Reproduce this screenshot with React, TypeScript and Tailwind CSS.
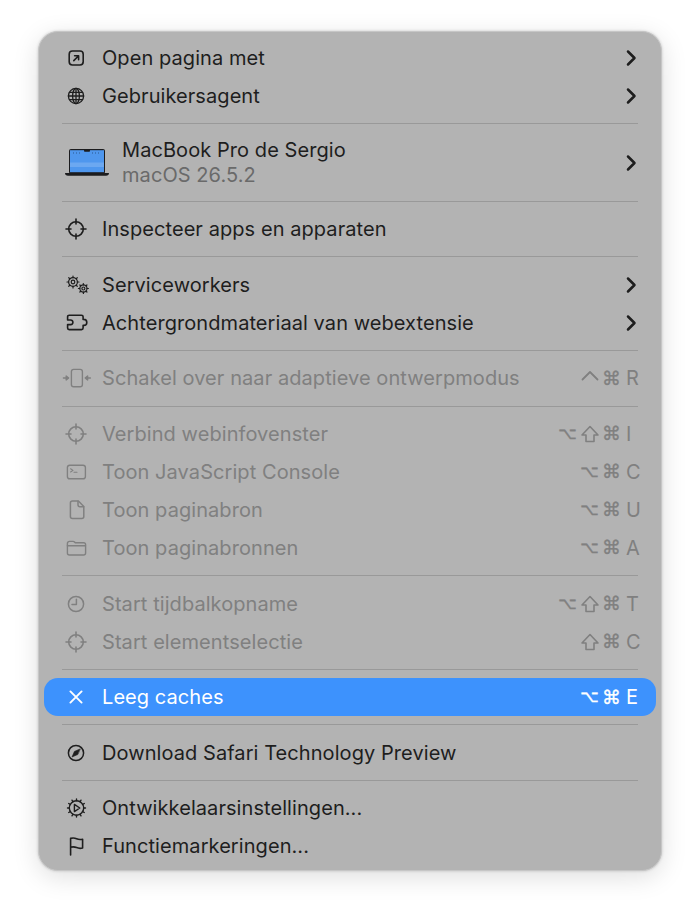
import type { ReactNode } from "react";

type Item = {
  label: string;
  icon: ReactNode;
  keys?: string[];
  sub?: boolean;
  disabled?: boolean;
  active?: boolean;
};

const Svg = ({ children, sw = 1.5 }: { children: ReactNode; sw?: number }) => (
  <svg
    viewBox="0 0 28 28"
    fill="none"
    stroke="currentColor"
    strokeWidth={sw}
    strokeLinecap="round"
    strokeLinejoin="round"
    className="w-[28px] h-[28px] overflow-visible shrink-0"
  >
    {children}
  </svg>
);

const Crosshair = (
  <Svg sw={1.6}>
    <circle cx="14" cy="14" r="7.3" />
    <path d="M14 4v5M14 19v5M4 14h5M19 14h5" />
  </Svg>
);

const OpenIcon = (
  <Svg sw={1.6}>
    <rect x="7.2" y="7" width="14" height="14" rx="3.2" />
    <path d="M11.800 16.600l4.600-4.600M12.600 11.800h4v4" />
  </Svg>
);

const GlobeIcon = (
  <Svg sw={1.3}>
    <circle cx="14" cy="14" r="7.6" />
    <ellipse cx="14" cy="14" rx="3.400" ry="7.600" />
    <path d="M14 6.400v15.200M6.400 14h15.200M7.400 10.400h13.200M7.400 17.600h13.200" />
  </Svg>
);

// ring with short radial teeth
const Gear = ({ x, y, ring, outer, teeth, hole }: { x: number; y: number; ring: number; outer: number; teeth: number; hole?: number }) => (
  <g>
    <circle cx={x} cy={y} r={ring} />
    {Array.from({ length: teeth }).map((_, i) => {
      const a = (i / teeth) * Math.PI * 2;
      return (
        <line
          key={i}
          x1={x + Math.cos(a) * ring}
          y1={y + Math.sin(a) * ring}
          x2={x + Math.cos(a) * outer}
          y2={y + Math.sin(a) * outer}
        />
      );
    })}
    {hole && <circle cx={x} cy={y} r={hole} />}
  </g>
);

const GearsIcon = (
  <Svg sw={1.2}>
    <Gear x={11} y={11} ring={4.400} outer={6} teeth={8} hole={1.800} />
    <Gear x={21.400} y={17.500} ring={3.600} outer={5} teeth={8} hole={1.500} />
  </Svg>
);

const PuzzleIcon = (
  <Svg sw={1.6}>
    <path d="M7.200 6.200h12.300a1.600 1.600 0 0 1 1.600 1.600v2.600h.7a3 3 0 0 1 0 6h-.7v2.600a1.600 1.600 0 0 1-1.600 1.600H7.200a1.600 1.600 0 0 1-1.600-1.600v-3.400h3a2.300 2.300 0 0 0 0-4.600h-3V7.800a1.600 1.600 0 0 1 1.600-1.600z" />
  </Svg>
);

const AdaptiveIcon = (
  <Svg sw={1.4}>
    <rect x="9.400" y="5.400" width="11" height="17.400" rx="2.200" />
    <path d="M1.400 14h4.400M24 14h4.400" />
    <path d="M6.600 14l-2.400-2v4zM23.200 14l2.400-2v4z" fill="currentColor" />
  </Svg>
);

const TerminalIcon = (
  <Svg sw={1.4}>
    <rect x="5.400" y="7.200" width="18" height="13.600" rx="2.400" />
    <path d="M8.600 10.800l2.400 1.600-2.400 1.600M12 14.200h3" strokeWidth="1.100" />
  </Svg>
);

const FileIcon = (
  <Svg sw={1.5}>
    <path d="M10.400 5h6l5.400 5.600v10a2 2 0 0 1-2 2h-9.400a2 2 0 0 1-2-2V7a2 2 0 0 1 2-2z" />
    <path d="M16 5.200v3.600a2 2 0 0 0 2 2h3.600" />
  </Svg>
);

const FolderIcon = (
  <Svg sw={1.4}>
    <path d="M5.400 9.400a2 2 0 0 1 2-2h3.800c1.200 0 1.600 1.400 2.800 1.400h7.600a2 2 0 0 1 2 2v8.200a2 2 0 0 1-2 2H7.400a2 2 0 0 1-2-2z" />
    <path d="M5.400 11.800h18" />
  </Svg>
);

const ClockIcon = (
  <Svg>
    <circle cx="14" cy="14" r="7.600" />
    <path d="M14.400 9.200v5.200H10" />
  </Svg>
);

const CloseIcon = (
  <Svg sw={1.9}>
    <path d="M8.400 8.400l11.200 11.200M19.600 8.400L8.400 19.600" />
  </Svg>
);

const CompassIcon = (
  <Svg>
    <circle cx="14" cy="14" r="7.600" />
    <path d="M18 10l-5.600 2.400L10 18l5.600-2.400z" fill="currentColor" strokeWidth="0.600" />
  </Svg>
);

const DevSettingsIcon = (
  <Svg sw={1.4}>
    <Gear x={14.500} y={14} ring={7.200} outer={9} teeth={12} />
    <path d="M12.400 10.400l5.400 3.600-5.400 3.600z" />
  </Svg>
);

const FlagIcon = (
  <Svg sw={1.6}>
    <path d="M8.600 23V6.400c2.400-.6 4.200-.4 6 .4s3.600 1 6 .4v8.800c-2.400.6-4.200.4-6-.4s-3.600-1-6-.4" />
  </Svg>
);

const groups: Item[][] = [
  [
    { label: "Open pagina met", icon: OpenIcon, sub: true },
    { label: "Gebruikersagent", icon: GlobeIcon, sub: true },
  ],
  [{ label: "MAC", icon: null }],
  [{ label: "Inspecteer apps en apparaten", icon: Crosshair }],
  [
    { label: "Serviceworkers", icon: GearsIcon, sub: true },
    { label: "Achtergrondmateriaal van webextensie", icon: PuzzleIcon, sub: true },
  ],
  [
    {
      label: "Schakel over naar adaptieve ontwerpmodus",
      icon: AdaptiveIcon,
      keys: ["⌃", "⌘", "R"],
      disabled: true,
    },
  ],
  [
    { label: "Verbind webinfovenster", icon: Crosshair, keys: ["⌥", "⇧", "⌘", "I"], disabled: true },
    { label: "Toon JavaScript Console", icon: TerminalIcon, keys: ["⌥", "⌘", "C"], disabled: true },
    { label: "Toon paginabron", icon: FileIcon, keys: ["⌥", "⌘", "U"], disabled: true },
    { label: "Toon paginabronnen", icon: FolderIcon, keys: ["⌥", "⌘", "A"], disabled: true },
  ],
  [
    { label: "Start tijdbalkopname", icon: ClockIcon, keys: ["⌥", "⇧", "⌘", "T"], disabled: true },
    { label: "Start elementselectie", icon: Crosshair, keys: ["⇧", "⌘", "C"], disabled: true },
  ],
  [{ label: "Leeg caches", icon: CloseIcon, keys: ["⌥", "⌘", "E"], active: true }],
  [{ label: "Download Safari Technology Preview", icon: CompassIcon }],
  [
    { label: "Ontwikkelaarsinstellingen...", icon: DevSettingsIcon },
    { label: "Functiemarkeringen...", icon: FlagIcon },
  ],
];

function Chevron() {
  return (
    <svg viewBox="0 0 12 18" className="w-[12px] h-[18px] ml-auto mr-[1px]" fill="none" stroke="currentColor" strokeWidth="2.500" strokeLinecap="round" strokeLinejoin="round">
      <path d="M3 2.500L9.500 9 3 15.500" />
    </svg>
  );
}

function Laptop() {
  return (
    <svg viewBox="0 0 46 30" className="w-[46px] h-[30px] shrink-0">
      <rect x="5" y="1" width="36" height="25" rx="2" fill="#1c1c1e" />
      <rect x="6" y="2.200" width="34" height="22" fill="#4f97ee" />
      <rect x="6" y="14.500" width="34" height="4.500" fill="#6ca8f1" />
      <path d="M9 5h9M28 5h9" stroke="#1c3d66" strokeWidth="0.700" strokeDasharray="1 2" />
      <rect x="20" y="1.800" width="6" height="2" rx="0.800" fill="#1c1c1e" />
      <path d="M1 25h44c0 1.800-1.200 2.800-3 2.800H4c-1.800 0-3-1-3-2.800z" fill="#1c1c1e" />
    </svg>
  );
}

function ControlKey() {
  return (
    <svg viewBox="0 0 22 20" fill="none" stroke="currentColor" strokeWidth="1.800" strokeLinecap="round" strokeLinejoin="round" className="w-[22px] h-[20px]">
      <path d="M3.500 11.500L11 4l7.500 7.500" />
    </svg>
  );
}

function ShiftKey() {
  return (
    <svg viewBox="0 0 22 20" fill="none" stroke="currentColor" strokeWidth="1.600" strokeLinecap="round" strokeLinejoin="round" className="w-[22px] h-[20px]">
      <path d="M11 2.500l8 8.500h-4v6.500H7V11H3z" />
    </svg>
  );
}

function Keys({ keys }: { keys: string[] }) {
  const mods = keys.slice(0, -1);
  const letter = keys[keys.length - 1];
  return (
    <div className="ml-auto flex items-center">
      {mods.map((k, i) =>
        k === "⌃" ? (
          <ControlKey key={i} />
        ) : k === "⇧" ? (
          <ShiftKey key={i} />
        ) : k === "⌥" ? (
          <span key={i} className="w-[22px] text-center text-[16px] leading-none font-['DejaVu_Sans',sans-serif] [-webkit-text-stroke:0.4px]">
            {k}
          </span>
        ) : (
          <span key={i} className="w-[22px] text-center text-[19px] leading-none font-['DejaVu_Sans',sans-serif] [-webkit-text-stroke:0.3px]">
            {k}
          </span>
        )
      )}
      <span className="w-[12px] ml-[3.500px] text-[20px]">{letter}</span>
    </div>
  );
}

function Row({ item }: { item: Item }) {
  const color = item.active
    ? "bg-[#3d92fd] text-white"
    : item.disabled
      ? "text-[#808080]"
      : "text-[#1e1e1e]";
  return (
    <div className={`h-[38px] mx-[5px] px-[18px] rounded-[14px] flex items-center ${color}`}>
      <span className="mr-[12px] flex">{item.icon}</span>
      <span>{item.label}</span>
      {item.sub && <Chevron />}
      {item.keys && <Keys keys={item.keys} />}
    </div>
  );
}

function MacRow() {
  return (
    <div className="h-[60px] mx-[5px] pl-[20px] pr-[18px] flex items-center text-[#1e1e1e]">
      <Laptop />
      <div className="ml-[12px] flex flex-col leading-[25px]">
        <span>MacBook Pro de Sergio</span>
        <span className="text-[#6a6a6a]">macOS 26.5.2</span>
      </div>
      <Chevron />
    </div>
  );
}

export default function App() {
  return (
    <div className="w-[700px] h-[915px] bg-white pt-[31px] font-['Inter',sans-serif] text-[20px] tracking-[0.07px]">
      <div className="w-[624px] h-[840px] mx-auto pt-[7px] bg-[#b3b3b3] rounded-[20px] border border-[#c6c6c6] shadow-[0_0_3px_rgba(0,0,0,0.18),0_6px_26px_rgba(0,0,0,0.13)] box-border">
        {groups.map((group, g) => (
          <div key={g}>
            {g > 0 && (
              <div className="h-[17.600px] mx-[23px] flex items-center">
                <div className="w-full h-[1px] bg-[#999999]" />
              </div>
            )}
            {group.map((item) =>
              item.label === "MAC" ? <MacRow key={item.label} /> : <Row key={item.label} item={item} />
            )}
          </div>
        ))}
      </div>
    </div>
  );
}
